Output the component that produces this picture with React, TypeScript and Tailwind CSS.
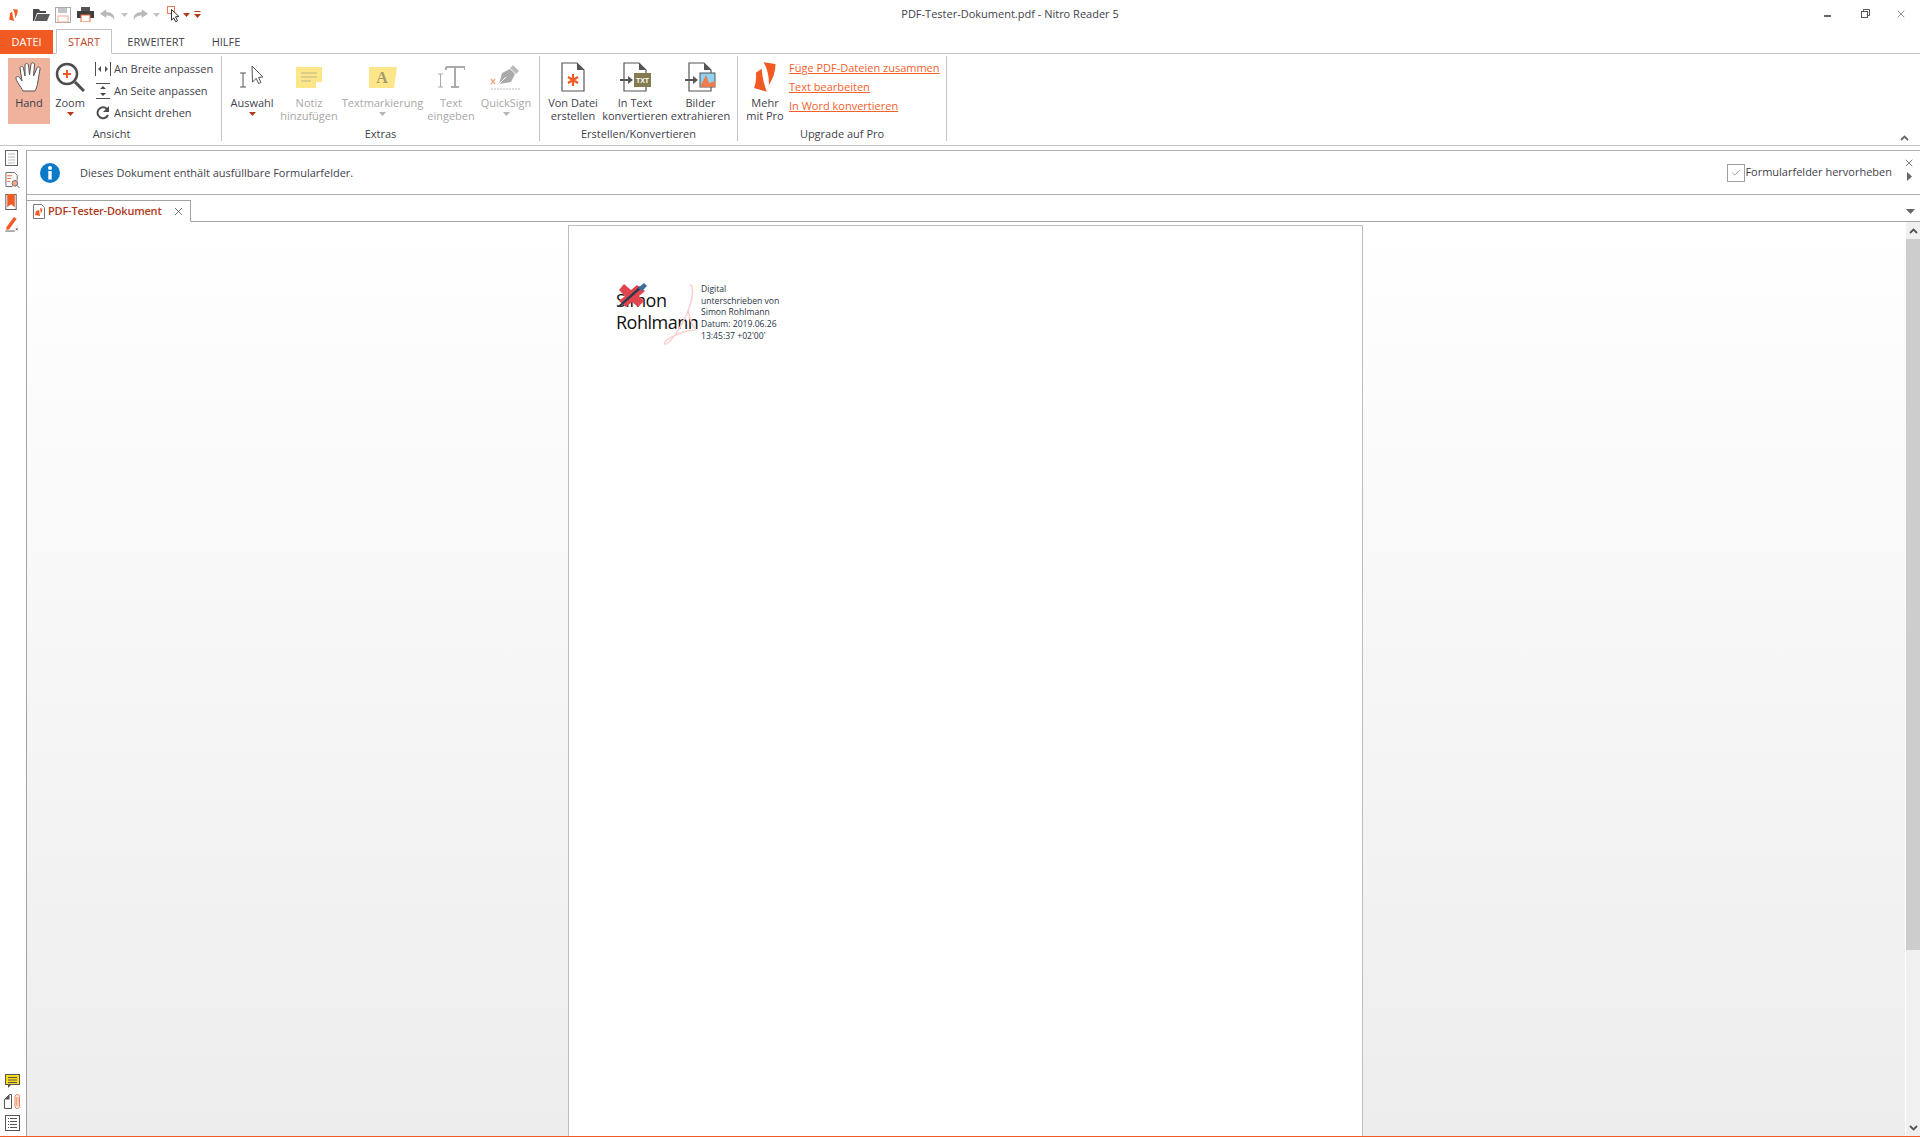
import React from 'react';
import { X, Check } from 'lucide-react';

const Caret = ({ color = '#b5391a', className = '' }: { color?: string; className?: string }) => (
  <svg className={className} width="7" height="4" viewBox="0 0 7 4"><path d="M0 0h7L3.500 4z" fill={color} /></svg>
);

const NitroLogo = ({ className = '' }: { className?: string }) => (
  <svg className={className} viewBox="0 0 23 31" fill="#f15a22">
    <path d="M10 0l12.500 2C22.500 10 20 17 15.500 24 16 15 14 7 10 0z" />
    <path d="M2 11l6-4c.5 8 2.500 16 5.500 24L0 27c2-5 2.500-11 2-16z" />
  </svg>
);

const PageOutline = ({ children, className = '' }: { children?: React.ReactNode; className?: string }) => (
  <svg className={className} width="24" height="30" viewBox="0 0 24 30" fill="none">
    <path d="M1 1h15l7 7v21H1z" stroke="#555" strokeWidth="1.200" fill="#fff" />
    <path d="M16 1l7 7h-7z" fill="#555" />
    {children}
  </svg>
);

const LargeButton = ({
  label,
  icon,
  width,
  disabled,
  caret,
  active,
}: {
  label: string[];
  icon: React.ReactNode;
  width: string;
  disabled?: boolean;
  caret?: boolean;
  active?: boolean;
}) => (
  <div
    className={`${width} h-[66px] shrink-0 flex flex-col items-center ${active ? 'bg-[#efb29c]' : ''} ${disabled ? 'text-[#a8a8a8]' : 'text-[#3f3f4c]'}`}
  >
    <div className="h-[38px] w-full flex items-center justify-center">{icon}</div>
    {label.map((l) => (
      <div key={l} className="h-[13px] leading-[13px] whitespace-nowrap">{l}</div>
    ))}
    {caret && <Caret className="mt-[3px]" color={disabled ? '#b5b5b5' : '#b5391a'} />}
  </div>
);

const Group = ({ title, width, children }: { title: string; width: string; children: React.ReactNode }) => (
  <div className={`${width} shrink-0 flex flex-col border-r border-[#c4c4c4] h-[85px] mt-[2px]`}>
    <div className="h-[71px] flex pt-[2px]">{children}</div>
    <div className="text-center leading-[13px] text-[#3f3f4c]">{title}</div>
  </div>
);

const SmallRow = ({ icon, label }: { icon: React.ReactNode; label: string }) => (
  <div className="flex items-center h-[22px] text-[#3f3f4c] whitespace-nowrap">
    <div className="w-[21px] flex justify-center pr-[2px]">{icon}</div>
    <span>{label}</span>
  </div>
);

const QuickIcons = () => (
  <div className="flex items-center pl-[9px] h-full">
    <NitroLogo className="w-[9px] h-[12px]" />
    <svg className="ml-[15px]" width="17" height="13" viewBox="0 0 17 13"><path d="M0 13V1h6l1 2h6v2H4L1 13z" fill="#4a4a4a" /><path d="M4.500 6H17l-3 7H1.500z" fill="#5c5c5c" /></svg>
    <svg className="ml-[5px]" width="16" height="16" viewBox="0 0 16 16"><rect x=".5" y=".5" width="15" height="15" fill="#fff" stroke="#aaa" /><rect x="3" y="1" width="9" height="5" fill="#c4c4c4" /><rect x="3" y="9" width="10" height="6" fill="#fff" stroke="#f4a98c" /></svg>
    <svg className="ml-[6px]" width="17" height="15" viewBox="0 0 17 15"><rect x="4" y="0" width="9" height="4" fill="#555" /><rect y="4" width="17" height="7" fill="#3f3f3f" /><rect x="4" y="8" width="9" height="7" fill="#fff" stroke="#ef6b3a" /></svg>
    <svg className="ml-[6px]" width="16" height="12" viewBox="0 0 18 13"><path d="M7 0L0 5l7 5V7c4 0 7 1 9 5 1-6-3-9-9-9z" fill="#b9b9b9" /></svg>
    <Caret className="ml-[5px]" color="#c2c2c2" />
    <svg className="ml-[4px]" width="16" height="12" viewBox="0 0 18 13"><path d="M11 0l7 5-7 5V7C7 7 4 8 2 12 1 6 5 3 11 3z" fill="#b9b9b9" /></svg>
    <Caret className="ml-[5px]" color="#c2c2c2" />
    <svg className="ml-[7px]" width="14" height="18" viewBox="0 0 14 18"><rect x=".5" y=".5" width="7" height="7" fill="#fff" stroke="#ee7a50" /><path d="M4.500 3.500l7.500 7-3.500.3 2 4-1.800 1-2-4-2.200 2.500z" fill="#fff" stroke="#333" /></svg>
    <Caret className="ml-[2px]" />
    <svg className="ml-[4px]" width="7" height="7" viewBox="0 0 7 7"><rect width="6" height="1" x=".5" fill="#b5391a" /><path d="M0 3h7L3.500 7z" fill="#b5391a" /></svg>
  </div>
);

const Ribbon = () => (
  <div className="h-[92px] shrink-0 border-b border-[#c4c4c4] flex relative">
    <Group title="Ansicht" width="w-[222px] pl-[2px]">
      <div className="pl-[6px] flex">
        <LargeButton
          active
          width="w-[42px]"
          label={['Hand']}
          icon={
            <svg width="28" height="32" viewBox="0 0 28 32" fill="#fff" stroke="#555" strokeWidth="1" strokeLinejoin="round">
              <path d="M8 30C6 26 1 20 1 17c0-2 2-2 4 0l2 3L5 7c0-2 3-2 3.500 0L10 15V4c0-2 3-2 3.500 0l1 10L16 3c.5-2 3.500-1.500 3.500 1l-1 11L22 7c1-2 3.500-1 3 1l-2 12c-.5 5-2 8-3 10z" />
            </svg>
          }
        />
        <div className="ml-[5px]">
          <LargeButton
            width="w-[30px]"
            label={['Zoom']}
            caret
            icon={
              <svg width="30" height="30" viewBox="0 0 30 30" fill="none">
                <circle cx="12" cy="12" r="10" stroke="#4d4d4d" strokeWidth="2.500" fill="#fff" />
                <path d="M20 20l9 9" stroke="#4d4d4d" strokeWidth="3" />
                <path d="M12 8v8M8 12h8" stroke="#f15a22" strokeWidth="2" />
              </svg>
            }
          />
        </div>
        <div className="ml-[8px] -mt-[2px] pt-[2px]">
          <SmallRow
            label="An Breite anpassen"
            icon={
              <svg width="16" height="14" viewBox="0 0 16 14" fill="#4d4d4d"><path d="M.5 0v14M15.500 0v14" stroke="#4d4d4d" fill="none" /><path d="M6 4v6L3 7zM10 4v6l3-3z" /></svg>
            }
          />
          <SmallRow
            label="An Seite anpassen"
            icon={
              <svg width="14" height="16" viewBox="0 0 14 16" fill="#4d4d4d"><path d="M0 .5h14M0 15.500h14" stroke="#4d4d4d" fill="none" /><path d="M4 6h6L7 3zM4 10h6l-3 3z" /></svg>
            }
          />
          <SmallRow
            label="Ansicht drehen"
            icon={
              <svg width="14" height="14" viewBox="0 0 14 14" fill="none"><path d="M12 9a5.500 5.500 0 1 1-1-6" stroke="#4d4d4d" strokeWidth="2" /><path d="M13 0v6H7z" fill="#4d4d4d" /></svg>
            }
          />
        </div>
      </div>
    </Group>
    <Group title="Extras" width="w-[318px]">
      <div className="pl-[5px] flex">
        <LargeButton
          width="w-[50px]"
          label={['Auswahl']}
          caret
          icon={
            <svg width="28" height="24" viewBox="0 0 28 24" fill="none">
              <path d="M2 8h6M5 8v14M2 22h6" stroke="#555" />
              <path d="M14 1l11 11-4.500.4 2.500 5-2.400 1.200-2.400-5.200-3.700 3.600z" fill="#fff" stroke="#555" />
            </svg>
          }
        />
        <LargeButton
          disabled
          width="w-[64px]"
          label={['Notiz', 'hinzufügen']}
          icon={
            <svg width="26" height="21" viewBox="0 0 26 21"><path d="M0 0h26v15l-6 6H0z" fill="#fde68a" /><path d="M20 21v-6h6z" fill="#fff" /><path d="M5 6h16M5 10h16M5 14h10" stroke="#bdb48a" /></svg>
          }
        />
        <LargeButton
          disabled
          width="w-[83px]"
          label={['Textmarkierung']}
          caret
          icon={
            <svg width="28" height="21" viewBox="0 0 28 21">
              <path d="M0 0h28l-3 21H0z" fill="#fde68a" />
              <text x="13" y="16" textAnchor="middle" fontFamily="Liberation Serif, serif" fontWeight="700" fontSize="16" fill="#a39a6c">A</text>
            </svg>
          }
        />
        <LargeButton
          disabled
          width="w-[54px]"
          label={['Text', 'eingeben']}
          icon={
            <svg width="28" height="24" viewBox="0 0 28 24" fill="none"><path d="M9 2h19v3M18 2v20M14 22h8M9 2v3" stroke="#aaa" strokeWidth="2" /><path d="M1 9h5M3.500 9v13M1 22h5" stroke="#aaa" /></svg>
          }
        />
        <LargeButton
          disabled
          width="w-[56px]"
          label={['QuickSign']}
          caret
          icon={
            <svg width="32" height="26" viewBox="0 0 32 26" fill="none">
              <path d="M9 20l3-11 8-4 5 5-4 8z" fill="#aaa" />
              <path d="M9 20l7-7" stroke="#fff" />
              <path d="M20 4l3-3 6 6-3 3z" fill="#bbb" />
              <path d="M1 15l4 5M5 15l-4 5" stroke="#f4a98c" strokeWidth="1.500" />
              <path d="M1 25h29" stroke="#bbb" strokeDasharray="2 1" />
            </svg>
          }
        />
      </div>
    </Group>
    <Group title="Erstellen/Konvertieren" width="w-[198px]">
      <div className="flex">
        <LargeButton
          width="w-[66px]"
          label={['Von Datei', 'erstellen']}
          icon={
            <PageOutline>
              <path d="M12 12v12M7 15l10 6M17 15L7 21" stroke="#f15a22" strokeWidth="2.200" />
            </PageOutline>
          }
        />
        <LargeButton
          width="w-[58px]"
          label={['In Text', 'konvertieren']}
          icon={
            <svg width="31" height="30" viewBox="0 0 31 30" fill="none">
              <path d="M4 1h15l7 7v21H4z" stroke="#555" strokeWidth="1.200" fill="#fff" />
              <path d="M19 1l7 7h-7z" fill="#555" />
              <rect x="14" y="11" width="17" height="14" fill="#857a50" />
              <text x="22.500" y="21" textAnchor="middle" fontFamily="Liberation Sans, sans-serif" fontWeight="700" fontSize="7" fill="#fff">TXT</text>
              <path d="M0 18h9" stroke="#555" strokeWidth="2" />
              <path d="M8 14l5 4-5 4z" fill="#555" />
            </svg>
          }
        />
        <LargeButton
          width="w-[73px]"
          label={['Bilder', 'extrahieren']}
          icon={
            <svg width="31" height="30" viewBox="0 0 31 30" fill="none">
              <path d="M4 1h15l7 7v21H4z" stroke="#555" strokeWidth="1.200" fill="#fff" />
              <path d="M19 1l7 7h-7z" fill="#555" />
              <rect x="15" y="11" width="15" height="14" fill="#8fd3ee" stroke="#555" />
              <path d="M15 25l6-12 3 8 6-2v6z" fill="#ef7b4d" />
              <path d="M0 18h9" stroke="#555" strokeWidth="2" />
              <path d="M8 14l5 4-5 4z" fill="#555" />
            </svg>
          }
        />
      </div>
    </Group>
    <Group title="Upgrade auf Pro" width="w-[209px]">
      <div className="flex pl-[8px]">
        <LargeButton width="w-[38px]" label={['Mehr', 'mit Pro']} icon={<NitroLogo className="w-[22px] h-[30px]" />} />
        <div className="ml-[5px] flex flex-col gap-[6px] text-[#f4622a] underline whitespace-nowrap pt-[3px]">
          <span className="h-[13px] leading-[13px]">Füge PDF-Dateien zusammen</span>
          <span className="h-[13px] leading-[13px]">Text bearbeiten</span>
          <span className="h-[13px] leading-[13px]">In Word konvertieren</span>
        </div>
      </div>
    </Group>
    <svg className="absolute right-[11px] bottom-[4px]" width="9" height="6" viewBox="0 0 9 6" fill="none"><path d="M1 5l3.500-3.500L8 5" stroke="#666" strokeWidth="1.800" /></svg>
  </div>
);

const SideBar = () => (
  <div className="w-[27px] shrink-0 border-r border-[#a3a3a3] flex flex-col items-center justify-between pr-[2px] pb-[5px] mt-[4px]">
    <div className="flex flex-col gap-[6px]">
      <svg width="13" height="16" viewBox="0 0 13 16" fill="none"><rect x=".5" y=".5" width="12" height="15" stroke="#666" /><path d="M3 4h7M3 7h7M3 10h7M3 13h7" stroke="#bbb" /></svg>
      <svg width="15" height="16" viewBox="0 0 15 17" fill="none"><path d="M.5.500h9l3 3V9M.5.500v15h7" stroke="#666" /><path d="M2 4h5M2 7h4M2 10h3" stroke="#f15a22" /><circle cx="10" cy="12" r="3" fill="#f4a98c" stroke="#666" /><path d="M12 14l3 3" stroke="#666" /></svg>
      <svg width="12" height="16" viewBox="0 0 12 17" fill="none"><rect x=".5" y=".5" width="11" height="16" stroke="#555" /><path d="M2 0h8v14l-4-3-4 3z" fill="#f15a22" /></svg>
      <svg width="14" height="16" viewBox="0 0 14 17" fill="none"><path d="M1 12L9 1l3 2-8 11-3 1z" fill="#f15a22" /><path d="M0 16h10" stroke="#555" /><path d="M11 13l2 2M13 13l-2 2" stroke="#555" /></svg>
    </div>
    <div className="flex flex-col gap-[6px] items-center">
      <svg width="15" height="14" viewBox="0 0 15 14"><rect x=".5" y=".5" width="14" height="10" fill="#ffd91a" stroke="#555" /><path d="M3 3.500h9M3 6h9M3 8.500h9" stroke="#555" /><path d="M3 11h3l-3 3z" fill="#555" /></svg>
      <svg width="16" height="15" viewBox="0 0 16 15" fill="none"><path d="M.5 14.500v-9L5.500.5h2v14z" stroke="#555" /><path d="M.5 5.500l5-5v5z" fill="#555" /><rect x="11" y=".5" width="4.500" height="14" rx="2.200" stroke="#ef7b4d" /><rect x="12.500" y="3" width="1.500" height="9" rx=".7" stroke="#ef7b4d" strokeWidth=".7" /></svg>
      <svg width="15" height="16" viewBox="0 0 15 16" fill="none"><rect x=".5" y=".5" width="14" height="15" stroke="#555" /><path d="M3 3.500h1M5 3.500h7M3 6.500h1M5 6.500h7M3 9.500h1M5 9.500h7M3 12.500h1M5 12.500h7" stroke="#555" /></svg>
    </div>
  </div>
);

const InfoBar = () => (
  <div className="h-[45px] shrink-0 border-y border-[#b0b0b0] mt-[4px] flex items-center pl-[13px] pr-[7px] text-[#3f3f4c]">
    <svg width="20" height="20" viewBox="0 0 20 20" className="shrink-0">
      <circle cx="10" cy="10" r="10" fill="#0b7ac9" />
      <circle cx="10" cy="5" r="2" fill="#fff" />
      <rect x="8.300" y="8" width="3.400" height="8.500" fill="#fff" />
    </svg>
    <span className="ml-[20px] mt-[1px]">Dieses Dokument enthält ausfüllbare Formularfelder.</span>
    <div className="ml-auto flex items-center">
      <div className="w-[18px] h-[18px] border border-[#a0a0a0] flex items-center justify-center">
        <Check size={10} color="#666" strokeWidth={1.500} />
      </div>
      <span>Formularfelder hervorheben</span>
      <div className="ml-[13px] w-[8px] flex flex-col items-center gap-[3px] -mt-[7px]">
        <X size={12} color="#555" strokeWidth={1.500} />
        <svg width="5" height="9" viewBox="0 0 5 9"><path d="M0 0l5 4.500L0 9z" fill="#666" /></svg>
      </div>
    </div>
  </div>
);

const TabStrip = () => (
  <div className="h-[27px] shrink-0 flex items-end border-b border-[#a3a3a3]">
    <div className="w-[164px] h-[22px] -mb-px border border-[#a3a3a3] border-b-white bg-white border-l-0 flex items-center pl-[6px]">
      <svg width="12" height="15" viewBox="0 0 12 15"><path d="M.5.500h8l3 3v11H.5z" fill="#fff" stroke="#777" /><path d="M7 4l2.500 1-1.500 5zM3 7l3-1 1 6-5-1z" fill="#f15a22" /></svg>
      <span className="ml-[3px] font-semibold text-[#b23a1c] whitespace-nowrap tracking-[-0.2px]">PDF-Tester-Dokument</span>
      <X size={13} color="#555" strokeWidth={1.500} className="ml-auto mr-[5px]" />
    </div>
    <svg className="ml-auto mr-[5px] mb-[7px]" width="9" height="5" viewBox="0 0 9 5"><path d="M0 0h9L4.500 5z" fill="#666" /></svg>
  </div>
);

const SignatureBlock = () => (
  <div className="relative flex items-start pt-[51px] pl-[47px]">
    <div className="relative w-[82px] text-[#111] text-[18px] leading-[22px] pt-[12px] tracking-[-0.5px]">
      <div>Simon</div>
      <div>Rohlmann</div>
      <svg className="absolute left-0 top-[6px]" width="32" height="25" viewBox="0 0 32 25">
        <path d="M8 1l7 6 6-5 8 6-6 5 5 5-6 6-6-5-6 5-7-6 6-5-6-6z" fill="#e0444c" />
        <path d="M1 24L24 3l2 2L4 24z" fill="#2b3a4a" />
        <path d="M22 5l6-5 3 3-5 5z" fill="#3f6d9a" />
      </svg>
    </div>
    <svg className="absolute left-[93px] top-[54px]" width="34" height="70" viewBox="0 0 34 70" fill="none">
      <path d="M28 6c3-4 5 10-4 30-6 13-18 30-21 28-4-3 18-14 30-14M26 30c2 10 4 16 8 20" stroke="#f8d0d0" strokeWidth="1.500" />
    </svg>
    <div className="relative text-[8.600px] leading-[11.700px] text-[#2a3344] ml-[3px] mt-[7px] whitespace-nowrap">
      <div>Digital</div>
      <div>unterschrieben von</div>
      <div>Simon Rohlmann</div>
      <div>Datum: 2019.06.26</div>
      <div>13:45:37 +02'00'</div>
    </div>
  </div>
);

const ScrollBar = () => (
  <div className="w-[15px] shrink-0 bg-[#f0f0f0] border-l border-white flex flex-col items-center">
    <div className="h-[17px] flex items-center">
      <svg width="9" height="6" viewBox="0 0 9 6" fill="none"><path d="M1 5l3.500-3.500L8 5" stroke="#555" strokeWidth="1.800" /></svg>
    </div>
    <div className="w-full h-[711px] bg-[#cdcdcd]" />
    <div className="mt-auto h-[17px] flex items-center">
      <svg width="9" height="6" viewBox="0 0 9 6" fill="none"><path d="M1 1l3.500 3.500L8 1" stroke="#555" strokeWidth="1.800" /></svg>
    </div>
  </div>
);

export default function App() {
  return (
    <div className="h-screen w-full overflow-hidden flex flex-col bg-white border-b border-[#f15a22] text-[11px] text-[#3f3f4c] [font-family:'Open_Sans',sans-serif]">
      <div className="h-[29px] shrink-0 flex items-center">
        <div className="w-[280px] h-full">
          <QuickIcons />
        </div>
        <div className="flex-1 text-center -mt-[1px]">PDF-Tester-Dokument.pdf - Nitro Reader 5</div>
        <div className="w-[180px] h-full flex items-center justify-end pr-[13px] -mt-[2px]">
          <div className="w-[7px] h-[2px] bg-[#666] mt-[5px]" />
          <svg className="ml-[30px]" width="9" height="9" viewBox="0 0 9 9" fill="none"><rect x=".5" y="2.500" width="6" height="6" stroke="#555" /><path d="M2.500 2.500v-2h6v6h-2" stroke="#555" /></svg>
          <X className="ml-[25px]" size={12} color="#555" strokeWidth={1.300} />
        </div>
      </div>
      <div className="h-[25px] shrink-0 flex items-end border-b border-[#c4c4c4]">
        <div className="w-[53px] h-[24px] -mb-px bg-[#f15a22] text-white flex items-center justify-center">DATEI</div>
        <div className="ml-[3px] w-[56px] h-[25px] -mb-px pt-[1px] border border-[#c4c4c4] border-b-white bg-white text-[#c0492a] flex items-center justify-center">START</div>
        <div className="w-[88px] h-[24px] pt-[2px] flex items-center justify-center">ERWEITERT</div>
        <div className="w-[52px] h-[24px] pt-[2px] flex items-center justify-center">HILFE</div>
      </div>
      <Ribbon />
      <div className="flex-1 min-h-0 flex">
        <SideBar />
        <div className="flex-1 min-w-0 flex flex-col">
          <InfoBar />
          <TabStrip />
          <div className="flex-1 min-h-0 flex bg-linear-to-b from-white to-[#ededed]">
            <div className="flex-1 min-w-0 flex justify-center pt-[3px] pr-[1px] overflow-hidden">
              <div className="w-[795px] bg-white border border-b-0 border-[#bdbdbd]">
                <SignatureBlock />
              </div>
            </div>
            <ScrollBar />
          </div>
        </div>
      </div>
    </div>
  );
}
